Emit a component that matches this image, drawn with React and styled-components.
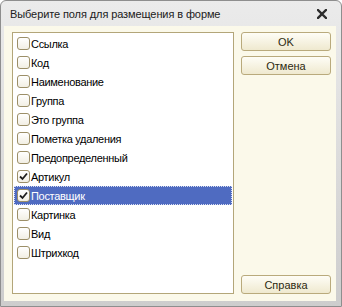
import styled, { createGlobalStyle } from "styled-components"

const fields = [
  { title: "Ссылка", checked: false },
  { title: "Код", checked: false },
  { title: "Наименование", checked: false },
  { title: "Группа", checked: false },
  { title: "Это группа", checked: false },
  { title: "Пометка удаления", checked: false },
  { title: "Предопределенный", checked: false },
  { title: "Артикул", checked: true },
  { title: "Поставщик", checked: true, selected: true },
  { title: "Картинка", checked: false },
  { title: "Вид", checked: false },
  { title: "Штрихкод", checked: false },
]

const GlobalStyle = createGlobalStyle`
  html, body {
    margin: 0;
    padding: 0;
    background: #ffffff;
  }
`

const App = () => {
  return (
    <>
      <GlobalStyle />
      <Window>
        <TitleBar>
          <Title>Выберите поля для размещения в форме</Title>
          <Close>
            <svg width="10" height="10" viewBox="0 0 10 10">
              <path
                d="M1 1 L9 9 M9 1 L1 9"
                stroke="#2c2c2c"
                strokeWidth="2.4"
                strokeLinecap="square"
              />
            </svg>
          </Close>
        </TitleBar>
        <Body>
          <List>
            {fields.map((field, index) => (
              <Row key={index} selected={field.selected}>
                <Box>
                  {field.checked && (
                    <svg width="9" height="9" viewBox="0 0 9 9">
                      <path
                        d="M1 4.5 L3.5 7 L8 1.5"
                        fill="none"
                        stroke="#1e1e1e"
                        strokeWidth="1.8"
                      />
                    </svg>
                  )}
                </Box>
                <Label>{field.title}</Label>
              </Row>
            ))}
          </List>
          <Buttons>
            <Button>OK</Button>
            <Button>Отмена</Button>
            <Spacer />
            <Button>Справка</Button>
          </Buttons>
        </Body>
      </Window>
    </>
  )
}

const Window = styled.div`
  width: 342px;
  height: 307px;
  box-sizing: border-box;
  display: flex;
  flex-direction: column;
  background: linear-gradient(#ebebeb, #cdcdcd);
  border: 1px solid #8e8e8e;
  border-radius: 6px 6px 0 0;
  padding: 0 5px 5px 3px;
  font-family: "Liberation Sans", Arial, sans-serif;
`

const TitleBar = styled.div`
  height: 25px;
  display: flex;
  align-items: center;
  justify-content: space-between;
  padding: 0 6px 0 6px;
  flex-shrink: 0;
`

const Title = styled.div`
  font-size: 11px;
  letter-spacing: -0.1px;
  color: #202020;
`

const Close = styled.div`
  display: flex;
  align-items: center;
  padding-right: 3px;
`

const Body = styled.div`
  flex: 1;
  display: flex;
  gap: 7px;
  background: #fbf9ea;
  padding: 6px 5px 7px 8px;
  min-height: 0;
`

const List = styled.div`
  width: 222px;
  box-sizing: border-box;
  background: #ffffff;
  border: 1px solid #b3a679;
  padding: 1px 1px 0 1px;
`

const Row = styled.div`
  height: 19px;
  box-sizing: border-box;
  display: flex;
  align-items: center;
  padding-left: 3px;
  background: ${(props) => (props.selected ? "#4f6bc1" : "transparent")};
  color: ${(props) => (props.selected ? "#ffffff" : "#000000")};
  outline: ${(props) => (props.selected ? "1px dotted #d8def2" : "none")};
  outline-offset: -1px;
`

const Box = styled.div`
  width: 13px;
  height: 13px;
  box-sizing: border-box;
  border: 1px solid #9c8f68;
  border-radius: 3px;
  background: linear-gradient(#ffffff, #f2efe4);
  display: flex;
  align-items: center;
  justify-content: center;
  flex-shrink: 0;
`

const Label = styled.span`
  font-size: 11px;
  letter-spacing: -0.3px;
  margin-left: 1px;
  white-space: nowrap;
`

const Buttons = styled.div`
  flex: 1;
  display: flex;
  flex-direction: column;
  gap: 5px;
`

const Spacer = styled.div`
  flex: 1;
`

const Button = styled.div`
  height: 19px;
  box-sizing: border-box;
  border: 1px solid #b9aa7c;
  border-radius: 3px;
  background: linear-gradient(#fefdf6, #efe9cf);
  display: flex;
  align-items: center;
  justify-content: center;
  font-size: 11px;
  color: #2d2a10;
`

export default App
